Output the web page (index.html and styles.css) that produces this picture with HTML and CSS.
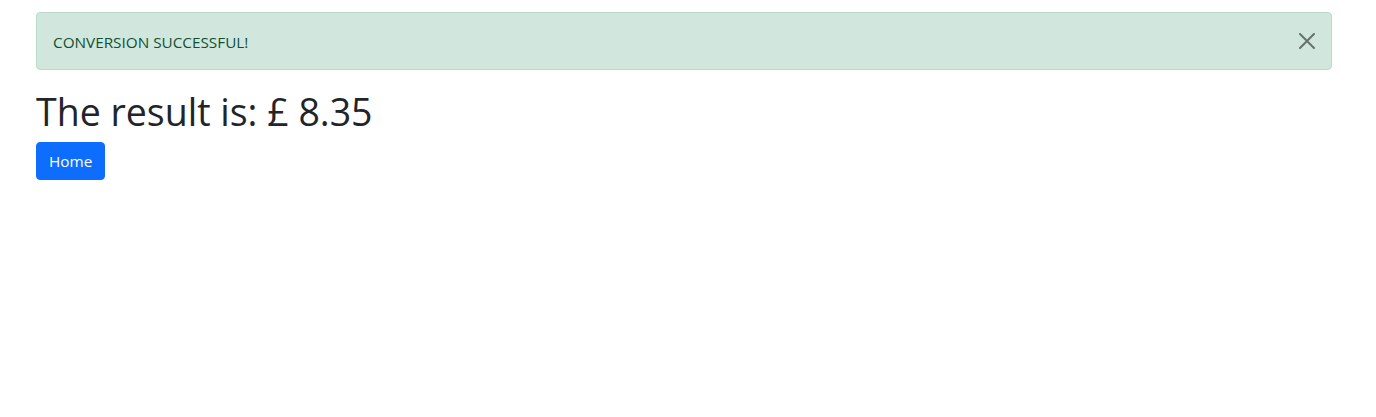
FILE: index.html
```html
<!DOCTYPE html>
<html lang="en">
<head>
<meta charset="utf-8">
<title>Result</title>
<link rel="stylesheet" href="styles.css">
</head>
<body>
<div class="container">
  <div class="alert" role="alert">
    <span class="alert-text">CONVERSION SUCCESSFUL!</span>
    <button class="btn-close" type="button" aria-label="Close">
      <svg viewBox="0 0 16 16" width="16" height="16"><path d="M.293.293a1 1 0 0 1 1.414 0L8 6.586 14.293.293a1 1 0 1 1 1.414 1.414L9.414 8l6.293 6.293a1 1 0 0 1-1.414 1.414L8 9.414l-6.293 6.293a1 1 0 0 1-1.414-1.414L6.586 8 .293 1.707a1 1 0 0 1 0-1.414z" fill="#000"/></svg>
    </button>
  </div>
  <h1 class="result">The result is: £ 8.35</h1>
  <a class="btn-home" href="#">Home</a>
</div>
</body>
</html>
```
FILE: styles.css
```css
* { box-sizing: border-box; }
body {
  margin: 0;
  font-family: "Open Sans", "Noto Sans", sans-serif;
  font-size: 16px;
  line-height: 1.5;
  color: #212529;
  background: #fff;
}
.container {
  width: 1296px;
  margin-left: 36px;
  padding-top: 12px;
}
.alert {
  position: relative;
  display: flex;
  align-items: center;
  height: 58px;
  padding: 16px 48px 16px 16px;
  margin-bottom: 16px;
  background: #d1e7dd;
  border: 1px solid #badbcc;
  border-radius: 4px;
  color: #0f5132;
}
.alert-text {
  font-size: 15.3px;
  line-height: 24px;
  padding-top: 1px;
}
.btn-close {
  position: absolute;
  top: 0;
  right: 0;
  width: 48px;
  height: 56px;
  padding: 0;
  border: 0;
  background: transparent;
  display: flex;
  align-items: center;
  justify-content: center;
  opacity: .5;
  cursor: pointer;
}
.btn-close svg { display: block; }
.result {
  margin: 0 0 6px;
  padding-top: 2px;
  font-size: 37.5px;
  font-weight: 400;
  line-height: 48px;
  color: #212529;
}
.btn-home {
  display: inline-block;
  height: 38px;
  padding: 6px 12px;
  border: 1px solid #0d6efd;
  border-radius: 4px;
  background: #0d6efd;
  color: #fff;
  font-size: 15.3px;
  line-height: 25px;
  text-decoration: none;
}
```
